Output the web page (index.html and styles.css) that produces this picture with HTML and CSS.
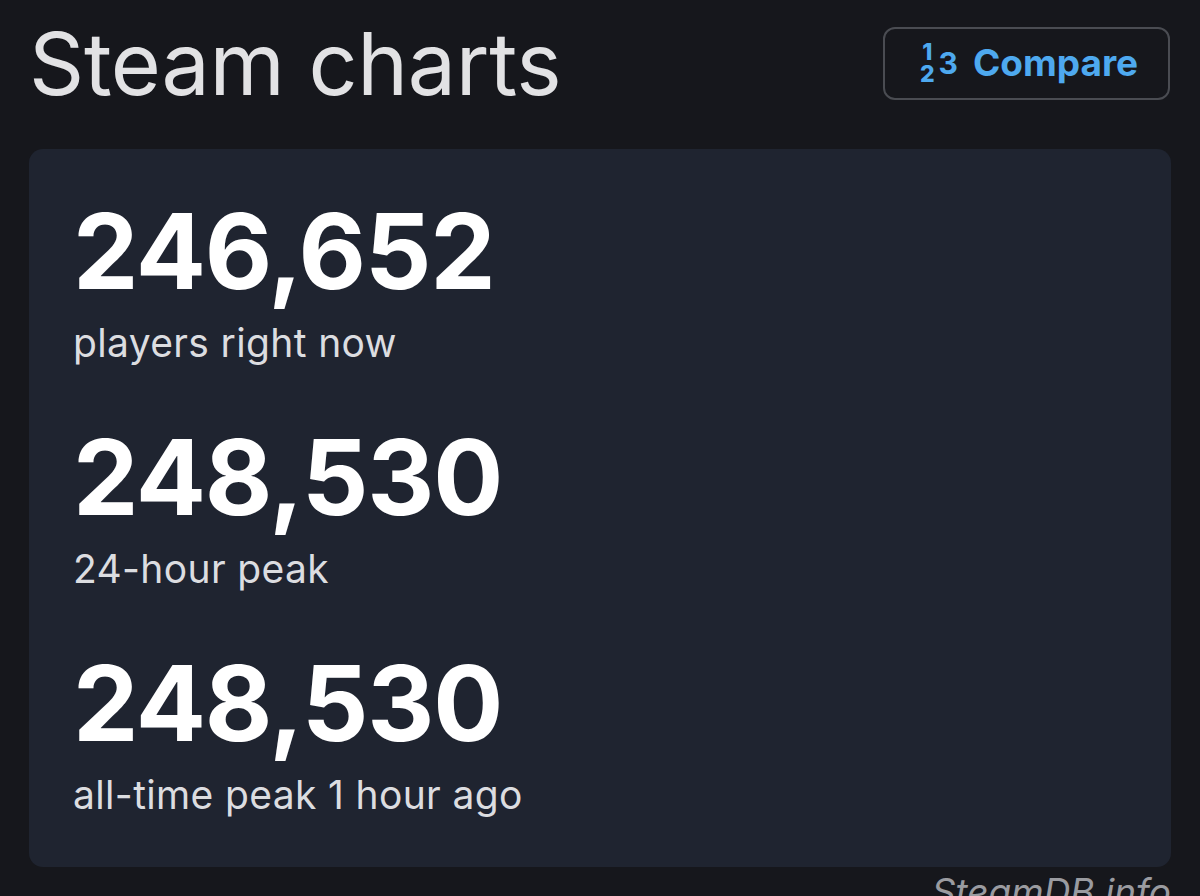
FILE: index.html
```html
<!DOCTYPE html>
<html lang="en">
<head>
<meta charset="utf-8">
<title>Steam charts</title>
<link rel="stylesheet" href="styles.css">
</head>
<body>
<div class="page">
  <header class="header">
    <h1 class="title">Steam charts</h1>
    <a class="compare-btn" href="#">
      <span class="compare-icon" aria-hidden="true">
        <span class="frac"><span class="frac-top">1</span><span class="frac-bot">2</span></span><span class="three">3</span>
      </span>
      <span class="compare-label">Compare</span>
    </a>
  </header>
  <section class="card">
    <div class="stat">
      <div class="stat-num">246,652</div>
      <div class="stat-label">players right now</div>
    </div>
    <div class="stat">
      <div class="stat-num">248,530</div>
      <div class="stat-label">24-hour peak</div>
    </div>
    <div class="stat">
      <div class="stat-num">248,530</div>
      <div class="stat-label">all-time peak 1 hour ago</div>
    </div>
  </section>
  <footer class="footer">SteamDB.info</footer>
</div>
</body>
</html>
```
FILE: styles.css
```css
html, body {
  margin: 0;
  padding: 0;
  background: #16171c;
  height: 100%;
  overflow: hidden;
}
body {
  font-family: "Inter", "Noto Sans", "Liberation Sans", sans-serif;
  color: #ffffff;
}
.page {
  padding: 12px 29px 0 29px;
}
.header {
  display: flex;
  justify-content: space-between;
  align-items: center;
  height: 104px;
}
.title {
  margin: 0;
  font-size: 86px;
  font-weight: 400;
  line-height: 104px;
  color: #e2e2e4;
  letter-spacing: -0.3px;
}
.compare-btn {
  display: flex;
  align-items: center;
  justify-content: center;
  box-sizing: border-box;
  width: 287px;
  height: 73px;
  margin-bottom: 2px;
  margin-right: 1px;
  padding-left: 5px;
  border: 2px solid #4a4c52;
  border-radius: 12px;
  text-decoration: none;
  color: #4ea9ef;
}
.compare-label {
  margin-left: 15px;
  font-size: 37px;
  font-weight: 700;
  line-height: 44px;
}
.compare-icon {
  display: flex;
  align-items: center;
  font-weight: 700;
  color: #4ea9ef;
}
.frac {
  display: flex;
  flex-direction: column;
  align-items: center;
  font-size: 23px;
  line-height: 22px;
  font-weight: 800;
}
.three {
  font-size: 30px;
  line-height: 32px;
  margin-left: 4px;
  font-weight: 700;
}
.card {
  margin-top: 33px;
  background: #1f2430;
  border-radius: 14px;
  padding: 47px 44px 48px 44px;
}
.stat + .stat {
  margin-top: 55px;
}
.stat-num {
  font-size: 104px;
  line-height: 110px;
  font-weight: 700;
  color: #ffffff;
  letter-spacing: -1.2px;
}
.stat-label {
  margin-top: 13px;
  font-size: 39px;
  line-height: 48px;
  font-weight: 400;
  letter-spacing: 0.35px;
  color: #dcdde0;
}
.footer {
  margin-top: 5px;
  text-align: right;
  font-size: 37px;
  line-height: 40px;
  font-style: italic;
  color: #9a9ba0;
}
```
